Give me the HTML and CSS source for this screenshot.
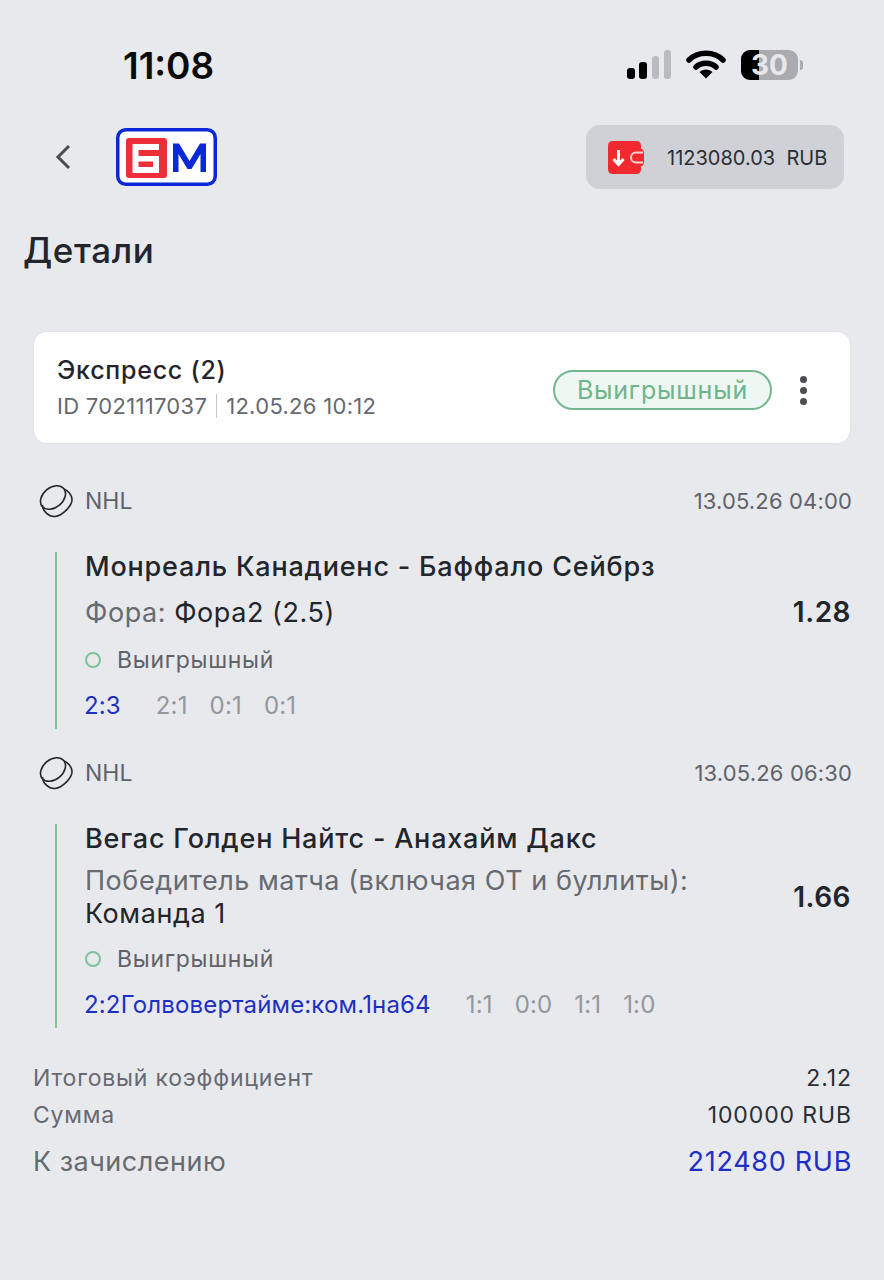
FILE: index.html
```html
<!DOCTYPE html>
<html lang="ru">
  <head>
    <meta charset="UTF-8" />
    <meta name="viewport" content="width=device-width, initial-scale=1.0" />
    <title>Детали</title>
    <link rel="stylesheet" href="styles.css">
  </head>
  <body>
    <div class="statusbar">
      <span class="time">11:08</span>
      <div class="status-icons">
        <svg class="signal" width="44" height="30" viewBox="0 0 44 30">
          <rect x="0" y="18" width="8" height="11" rx="3" fill="#000"/>
          <rect x="12" y="12" width="8" height="17" rx="3" fill="#000"/>
          <rect x="25" y="6" width="7" height="23" rx="3" fill="#b9bbbf"/>
          <rect x="37" y="0" width="7" height="29" rx="3" fill="#b9bbbf"/>
        </svg>
        <svg class="wifi" width="40" height="30" viewBox="0 0 40 30">
          <path d="M3 10 C12 1 28 1 37 10" fill="none" stroke="#000" stroke-width="5.5" stroke-linecap="round"/>
          <path d="M10 17 C15 12 25 12 30 17" fill="none" stroke="#000" stroke-width="5.5" stroke-linecap="round"/>
          <path d="M13.5 22 C17 18.5 23 18.5 26.5 22 L20 28.5 Z" fill="#000"/>
        </svg>
        <div class="battery">
          <div class="battery-body"><div class="battery-fill"></div><span class="battery-num">30</span></div>
          <div class="battery-cap"></div>
        </div>
      </div>
    </div>

    <div class="topbar">
      <svg class="back" width="20" height="28" viewBox="0 0 20 28">
        <path d="M16 3 L5 14 L16 25" fill="none" stroke="#4a4c50" stroke-width="3"/>
      </svg>
      <div class="logo">
        <svg width="101" height="58" viewBox="0 0 101 58">
          <rect x="1.75" y="1.75" width="97.5" height="54.5" rx="8" fill="#fff" stroke="#0a28d8" stroke-width="3.5"/>
          <rect x="10" y="10" width="41" height="40" rx="3" fill="#ee2e38"/>
          <path d="M16.5 16 H43 V22 H22.5 V28 H43 V45 H16.5 Z M22.5 33.5 V39 H37 V33.5 Z" fill="#fff" fill-rule="evenodd"/>
          <path d="M57 44 V15.5 H63 L73.5 33 L84 15.5 H90 V44 H84.5 V26 L75.5 41 H71.5 L62.5 26 V44 Z" fill="#0a28d8"/>
        </svg>
      </div>
      <div class="balance">
        <svg width="36" height="33" viewBox="0 0 36 33">
          <path d="M5 0 H28 Q33 0 33 5 V8 H34 Q36 9 36 12 V21 Q36 24 34 25 H33 V28 Q33 33 28 33 H5 Q0 33 0 28 V5 Q0 0 5 0 Z" fill="#f2292f"/>
          <path d="M10.5 9 V23 M5.5 18 L10.5 23.5 L15.5 18" fill="none" stroke="#fff" stroke-width="3"/>
          <path d="M35 11.5 H28 A5 5 0 0 0 28 21.5 H35" fill="none" stroke="#ffd3d3" stroke-width="2"/>
        </svg>
        <span class="balance-text">1123080.03&nbsp; RUB</span>
      </div>
    </div>

    <h1 class="title">Детали</h1>

    <div class="card">
      <div>
        <div class="card-name">Экспресс (2)</div>
        <div class="card-meta"><span>ID 7021117037</span><span class="sep"></span><span>12.05.26 10:12</span></div>
      </div>
      <div class="card-right">
        <span class="badge">Выигрышный</span>
        <div class="dots"><i></i><i></i><i></i></div>
      </div>
    </div>

    <div class="event">
      <div class="event-head">
        <div class="league">
          <svg class="puck" width="34" height="34" viewBox="0 0 34 34">
            <g fill="none" stroke="#24272c" stroke-width="1.6">
              <ellipse cx="14" cy="13.5" rx="14" ry="10" transform="rotate(-40 14 13.5)"/>
              <path d="M3.5 21 C3.5 27 9.5 33 16 32.5 C23 32 33.5 22 33 15 C32.7 11 29 6.5 25 5"/>
            </g>
          </svg>
          <span>NHL</span>
        </div>
        <span class="event-date">13.05.26 04:00</span>
      </div>
      <div class="event-body first">
        <div class="teams">Монреаль Канадиенс - Баффало Сейбрз</div>
        <div class="market-row">
          <div class="market"><span class="grey">Фора:</span> Фора2 (2.5)</div>
          <div class="odds">1.28</div>
        </div>
        <div class="result"><i class="ring"></i>Выигрышный</div>
        <div class="score"><span class="main">2:3</span><span class="periods"><span>2:1</span><span>0:1</span><span>0:1</span></span></div>
      </div>
    </div>

    <div class="event">
      <div class="event-head">
        <div class="league">
          <svg class="puck" width="34" height="34" viewBox="0 0 34 34">
            <g fill="none" stroke="#24272c" stroke-width="1.6">
              <ellipse cx="14" cy="13.5" rx="14" ry="10" transform="rotate(-40 14 13.5)"/>
              <path d="M3.5 21 C3.5 27 9.5 33 16 32.5 C23 32 33.5 22 33 15 C32.7 11 29 6.5 25 5"/>
            </g>
          </svg>
          <span>NHL</span>
        </div>
        <span class="event-date">13.05.26 06:30</span>
      </div>
      <div class="event-body">
        <div class="teams">Вегас Голден Найтс - Анахайм Дакс</div>
        <div class="market-row">
          <div class="market"><span class="grey">Победитель матча (включая ОТ и буллиты):</span><br>Команда 1</div>
          <div class="odds">1.66</div>
        </div>
        <div class="result"><i class="ring"></i>Выигрышный</div>
        <div class="score"><span class="main">2:2Голвовертайме:ком.1на64</span><span class="periods"><span>1:1</span><span>0:0</span><span>1:1</span><span>1:0</span></span></div>
      </div>
    </div>

    <div class="totals">
      <div class="total-row"><span>Итоговый коэффициент</span><span class="val">2.12</span></div>
      <div class="total-row"><span>Сумма</span><span class="val">100000 RUB</span></div>
      <div class="total-row payout"><span>К зачислению</span><span class="val">212480 RUB</span></div>
    </div>
  </body>
</html>
```

FILE: styles.css
```css
body {
  margin: 0;
  height: 1280px;
  overflow: hidden;
  background-color: #e7e9ed;
  color: #22252a;
  font-family: Inter, "Noto Sans", sans-serif;
}

.statusbar {
  display: flex;
  justify-content: space-between;
  align-items: center;
  height: 64px;
  padding: 33px 81px 0 123px;
}

.time {
  font-size: 37px;
  font-weight: 600;
  color: #0a0a0a;
}

.status-icons {
  display: flex;
  align-items: center;
  gap: 15px;
}

.battery {
  display: flex;
  align-items: center;
  gap: 2px;
}

.battery-body {
  position: relative;
  width: 57px;
  height: 30px;
  border-radius: 9px;
  background-color: #a9abae;
  display: flex;
  justify-content: center;
  align-items: center;
}

.battery-fill {
  position: absolute;
  left: 0;
  top: 0;
  bottom: 0;
  width: 18px;
  border-radius: 9px 0 0 9px;
  background-color: #000;
}

.battery-num {
  position: relative;
  font-size: 28px;
  line-height: 30px;
  font-weight: 700;
  color: #e8e8ea;
}

.battery-cap {
  width: 3px;
  height: 10px;
  border-radius: 0 3px 3px 0;
  background-color: #a9abae;
}

.topbar {
  display: flex;
  align-items: center;
  height: 64px;
  margin-top: 28px;
  padding: 0 40px 0 53px;
}

.back {
  margin-right: 43px;
}

.logo {
  display: flex;
}

.balance {
  margin-left: auto;
  display: flex;
  align-items: center;
  width: 258px;
  height: 64px;
  padding-left: 22px;
  box-sizing: border-box;
  border-radius: 14px;
  background-color: #cfd1d6;
}

.balance-text {
  margin-left: 23px;
  padding-top: 2px;
  font-size: 20px;
  color: #2b2e33;
}

.title {
  margin: 39px 0 0 23px;
  font-size: 35px;
  letter-spacing: 0.6px;
  line-height: 44px;
  font-weight: 500;
  color: #22262c;
}

.card {
  display: flex;
  justify-content: space-between;
  align-items: center;
  height: 111px;
  margin: 60px 34px 0;
  padding: 0 43px 0 23px;
  box-sizing: border-box;
  border-radius: 13px;
  background-color: #fff;
  box-shadow: 0 0 2px #d4d6da;
}

.card-name {
  font-size: 25px;
  letter-spacing: 0.75px;
  font-weight: 500;
  line-height: 34px;
}

.card-meta {
  display: flex;
  align-items: center;
  margin-top: 3px;
  font-size: 22px;
  letter-spacing: 0.3px;
  line-height: 32px;
  color: #65686e;
}

.sep {
  width: 1px;
  height: 24px;
  margin: 0 9px;
  background-color: #c4c6ca;
}

.card-right {
  display: flex;
  align-items: center;
  gap: 28px;
  margin-top: 5px;
}

.badge {
  padding: 0 22px;
  height: 40px;
  line-height: 36px;
  box-sizing: border-box;
  border: 2px solid #74b78f;
  border-radius: 20px;
  background-color: #eef7f1;
  color: #6fb48b;
  font-size: 25px;
  letter-spacing: 0.8px;
}

.dots {
  display: flex;
  flex-direction: column;
  gap: 4px;
}

.dots i {
  width: 7px;
  height: 7px;
  border-radius: 50%;
  background-color: #4c4e53;
}

.event {
  margin-top: 40px;
}

.event + .event {
  margin-top: 26px;
}

.event-head {
  display: flex;
  justify-content: space-between;
  align-items: center;
  height: 36px;
  margin: 0 32px 0 39px;
  color: #5f6268;
}

.league {
  display: flex;
  align-items: center;
  gap: 12px;
  font-size: 23px;
}

.event-date {
  font-size: 22px;
  letter-spacing: 0.15px;
}

.event-body {
  margin: 33px 33px 0 55px;
  padding: 0 0 0 28px;
  border-left: 2px solid #7cc598;
}

.teams {
  font-size: 27px;
  letter-spacing: 0.8px;
  font-weight: 500;
  line-height: 30px;
}

.market-row {
  display: flex;
  justify-content: space-between;
  align-items: center;
  margin-top: 10px;
}

.first .market-row {
  margin-top: 13px;
}

.market {
  font-size: 27px;
  letter-spacing: 0.55px;
  line-height: 33px;
}

.grey {
  color: #676a70;
}

.odds {
  font-size: 28px;
  letter-spacing: 0.5px;
  font-weight: 600;
}

.result {
  display: flex;
  align-items: center;
  margin-top: 13px;
  font-size: 23px;
  letter-spacing: 0.7px;
  line-height: 32px;
  color: #5f6268;
}

.first .result {
  margin-top: 15px;
}

.ring {
  width: 12px;
  height: 12px;
  margin-right: 16px;
  border: 2px solid #7cc39b;
  border-radius: 50%;
}

.score {
  display: flex;
  margin: 14px 0 0 -1px;
  font-size: 24px;
  letter-spacing: 0.15px;
  line-height: 32px;
  padding-bottom: 7px;
}

.main {
  color: #1e2fc4;
}

.periods {
  display: flex;
  gap: 22px;
  margin-left: 35px;
  color: #94979c;
}

.totals {
  margin: 32px 32px 0 33px;
  color: #676a70;
  font-size: 23px;
  letter-spacing: 0.8px;
}

.total-row {
  display: flex;
  justify-content: space-between;
  line-height: 37px;
}

.val {
  color: #2b2e33;
  letter-spacing: 0.9px;
}

.payout {
  margin-top: 8px;
  font-size: 27px;
  letter-spacing: 0.5px;
  line-height: 40px;
}

.payout .val {
  color: #1e2fc4;
  letter-spacing: 0.7px;
}
```
